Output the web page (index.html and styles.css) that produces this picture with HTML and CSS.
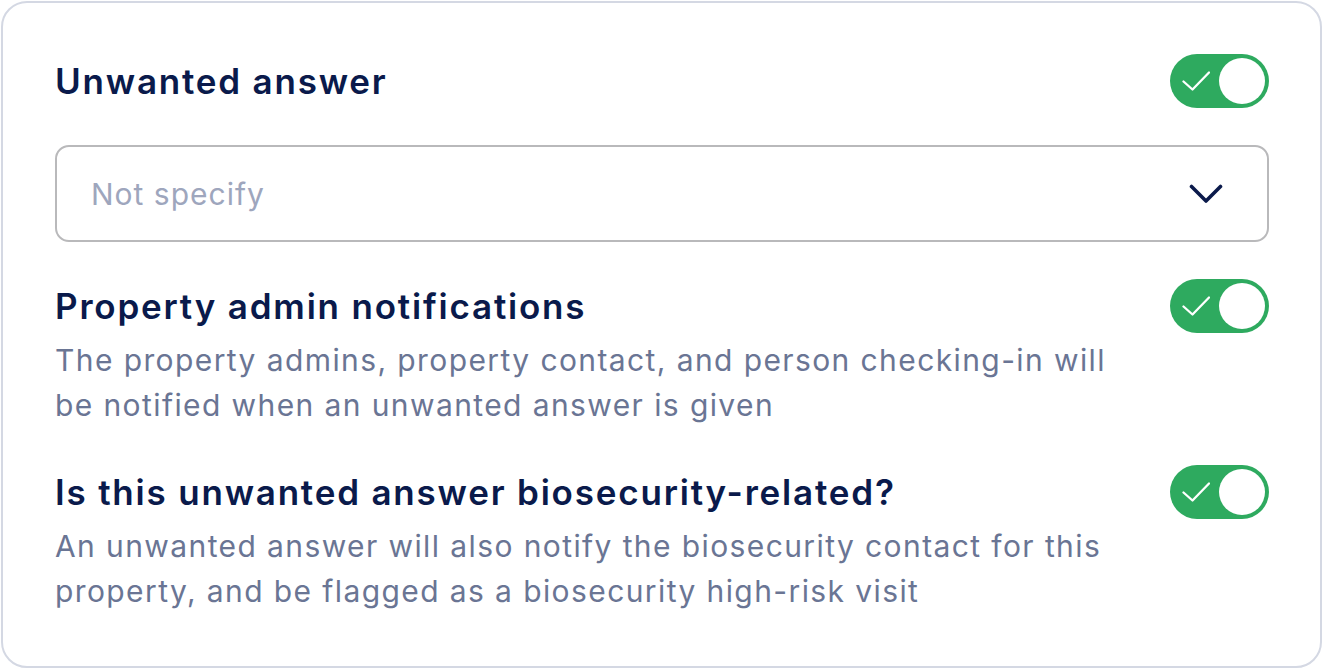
FILE: index.html
```html
<!DOCTYPE html>
<html lang="en">
<head>
<meta charset="utf-8">
<title>Unwanted answer settings</title>
<link rel="stylesheet" href="styles.css">
</head>
<body>
<div class="card">
  <div class="row">
    <h2 class="title">Unwanted answer</h2>
    <div class="toggle">
      <svg class="check" width="28" height="20" viewBox="0 0 28 20"><path d="M1.5 10.5 L10.5 18.5 L27 1.5" fill="none" stroke="#fff" stroke-width="2.3" stroke-linecap="round" stroke-linejoin="round"/></svg>
      <span class="knob"></span>
    </div>
  </div>

  <div class="select">
    <span class="placeholder">Not specify</span>
    <svg class="chevron" width="34" height="20" viewBox="0 0 34 20"><path d="M2.5 2.5 L17 17 L31.5 2.5" fill="none" stroke="#0b1a4b" stroke-width="3.6" stroke-linecap="round" stroke-linejoin="round"/></svg>
  </div>

  <div class="section">
    <div class="row">
      <h2 class="title">Property admin notifications</h2>
      <div class="toggle">
        <svg class="check" width="28" height="20" viewBox="0 0 28 20"><path d="M1.5 10.5 L10.5 18.5 L27 1.5" fill="none" stroke="#fff" stroke-width="2.3" stroke-linecap="round" stroke-linejoin="round"/></svg>
        <span class="knob"></span>
      </div>
    </div>
    <p class="desc">The property admins, property contact, and person checking-in will be notified when an unwanted answer is given</p>
  </div>

  <div class="section">
    <div class="row">
      <h2 class="title">Is this unwanted answer biosecurity-related?</h2>
      <div class="toggle">
        <svg class="check" width="28" height="20" viewBox="0 0 28 20"><path d="M1.5 10.5 L10.5 18.5 L27 1.5" fill="none" stroke="#fff" stroke-width="2.3" stroke-linecap="round" stroke-linejoin="round"/></svg>
        <span class="knob"></span>
      </div>
    </div>
    <p class="desc">An unwanted answer will also notify the biosecurity contact for this property, and be flagged as a biosecurity high-risk visit</p>
  </div>
</div>
</body>
</html>
```
FILE: styles.css
```css
* { box-sizing: border-box; }
html, body { margin: 0; padding: 0; background: #ffffff; }
body { font-family: "Inter", "Liberation Sans", sans-serif; }

.card {
  margin: 1px;
  width: 1321px;
  height: 667px;
  border: 2px solid #d4d8e3;
  border-radius: 26px;
  padding: 51px 51px 0 52px;
  display: flex;
  flex-direction: column;
  gap: 37px;
}

.row {
  display: flex;
  align-items: center;
  justify-content: space-between;
  height: 54px;
}

.title {
  margin: 0;
  font-size: 35px;
  font-weight: 600;
  color: #0a1a4b;
  letter-spacing: 1.8px;
}

.toggle {
  width: 99px;
  height: 54px;
  border-radius: 27px;
  background: #2eaa5f;
  display: flex;
  align-items: center;
  justify-content: space-between;
  padding: 0 4px 0 12px;
  flex: none;
}
.check { display: block; }
.knob {
  width: 46px;
  height: 46px;
  border-radius: 50%;
  background: #ffffff;
}

.select {
  height: 97px;
  border: 2px solid #b9b9bb;
  border-radius: 14px;
  display: flex;
  align-items: center;
  justify-content: space-between;
  padding: 0 44px 0 34px;
}
.placeholder {
  font-size: 30px;
  letter-spacing: 1px;
  color: #9ea6bd;
}
.chevron { display: block; }

.desc {
  margin: 5px 0 0;
  max-width: 1080px;
  font-size: 30px;
  line-height: 45px;
  letter-spacing: 1.4px;
  color: #6a7594;
}
```
